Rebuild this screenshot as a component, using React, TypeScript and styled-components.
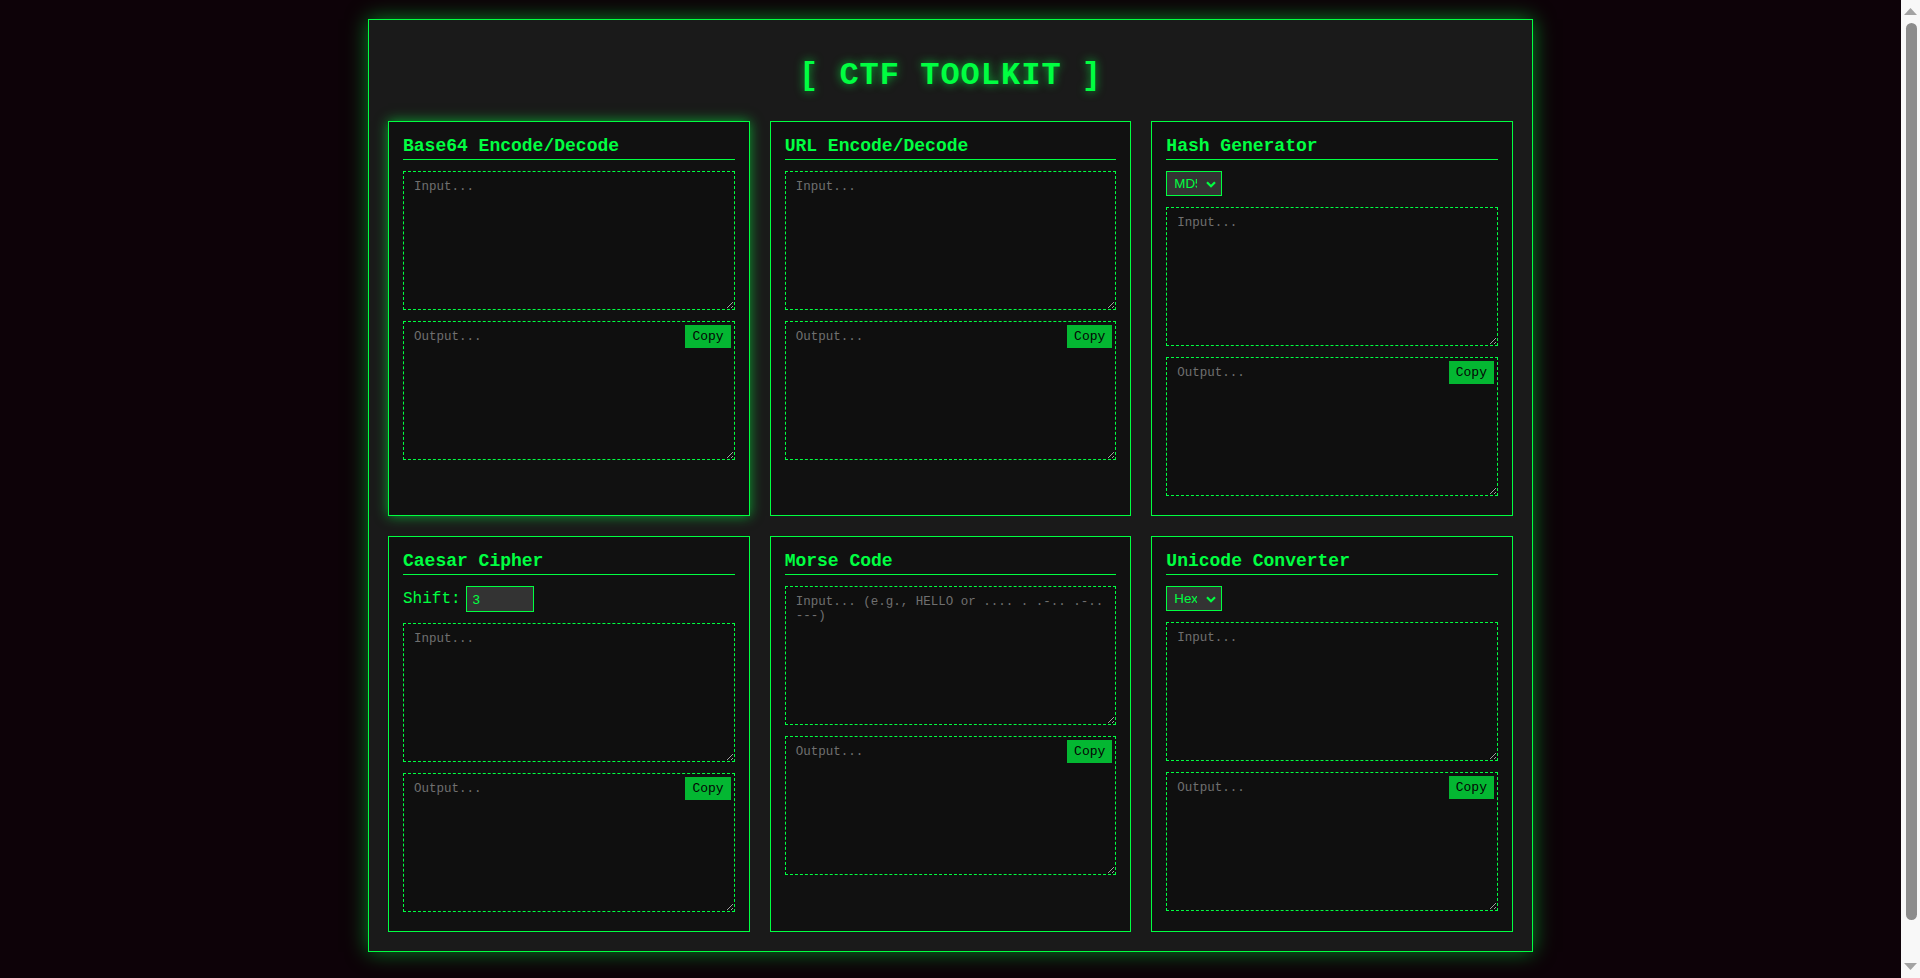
import React, { useState } from 'react';
import styled, { createGlobalStyle, css } from 'styled-components';

const GREEN = '#00ff41';
const MONO = `'Courier New', 'Liberation Mono', monospace`;
const SANS = `Arial, 'Liberation Sans', sans-serif`;

const GlobalStyle = createGlobalStyle`
  * { box-sizing: border-box; }
  html { background: #0d0208; }
  body {
    margin: 0;
    padding: 19px 19px 40px 0;
    background: #0d0208;
    color: ${GREEN};
    font-family: ${MONO};
  }
`;

const Terminal = styled.main`
  width: 1165px;
  margin: 0 auto;
  padding: 19px;
  background: #1a1a1a;
  border: 1px solid ${GREEN};
  box-shadow: 0 0 20px rgba(0, 255, 65, 0.5);
`;

const Heading = styled.h1`
  margin: 18px 0 27px;
  text-align: center;
  font-size: 32px;
  font-weight: bold;
  line-height: normal;
  letter-spacing: 1px;
  color: ${GREEN};
  text-shadow: 0 0 10px rgba(0, 255, 65, 0.7);
`;

const ToolGrid = styled.div`
  display: grid;
  grid-template-columns: repeat(3, 1fr);
  gap: 20px;
`;

const ToolCard = styled.section<{ $active?: boolean }>`
  display: flex;
  flex-direction: column;
  gap: 11px;
  padding: 14px 14px 19px;
  background: #111111;
  border: 1px solid ${GREEN};
  ${(p) =>
    p.$active &&
    css`
      box-shadow: 0 0 12px rgba(0, 255, 65, 0.6);
    `}
`;

const ToolTitle = styled.h3`
  margin: 0;
  padding-bottom: 3px;
  font-size: 18px;
  font-weight: bold;
  line-height: normal;
  color: ${GREEN};
  border-bottom: 1px solid ${GREEN};
`;

const Field = styled.textarea`
  display: block;
  width: 100%;
  height: 139px;
  margin: 0;
  padding: 8px 10px;
  background: #0f0f0f;
  color: ${GREEN};
  border: 1px dashed ${GREEN};
  border-radius: 0;
  font-family: ${MONO};
  font-size: 12.5px;
  line-height: normal;
  outline: none;
  &::placeholder {
    color: #707070;
  }
`;

const OutputBox = styled.div`
  position: relative;
`;

const CopyButton = styled.button`
  position: absolute;
  top: 4px;
  right: 4px;
  padding: 4px 7px;
  border: none;
  border-radius: 0;
  background: ${GREEN};
  opacity: 0.7;
  color: #000;
  font-family: ${MONO};
  font-size: 13px;
  line-height: normal;
  cursor: pointer;
`;

const PickerWrap = styled.div`
  position: relative;
  align-self: flex-start;
  display: flex;
`;

const Picker = styled.select`
  appearance: none;
  width: 56px;
  height: 25px;
  padding: 0 24px 0 7px;
  background: #333333;
  color: ${GREEN};
  border: 1px solid ${GREEN};
  border-radius: 0;
  font-family: ${SANS};
  font-size: 13.33px;
  outline: none;
`;

const PickerArrow = styled.svg`
  position: absolute;
  right: 6px;
  top: 50%;
  width: 10px;
  height: 7px;
  margin-top: -3px;
  pointer-events: none;
`;

const ControlRow = styled.div`
  display: flex;
  align-items: center;
  gap: 5px;
`;

const ControlLabel = styled.label`
  font-size: 16px;
  color: ${GREEN};
`;

const NumberInput = styled.input`
  width: 68px;
  height: 26px;
  padding: 0 6px;
  background: #333333;
  color: ${GREEN};
  border: 1px solid ${GREEN};
  border-radius: 0;
  font-family: ${SANS};
  font-size: 13.33px;
  outline: none;
`;

const ScrollRail = styled.div`
  position: fixed;
  top: 0;
  right: 0;
  bottom: 0;
  width: 19px;
  background: #f8f8f8;
  display: flex;
  flex-direction: column;
  align-items: center;
  padding: 8px 0;
  gap: 8px;
`;

const ScrollArrow = styled.svg<{ $end?: boolean }>`
  width: 13px;
  height: 7px;
  flex: none;
  ${(p) =>
    p.$end &&
    css`
      margin-top: auto;
    `}
`;

const ScrollThumb = styled.div`
  width: 11px;
  height: 897px;
  margin-left: 1px;
  background: #8c8c8c;
  border-radius: 6px;
`;

type Tool = {
  title: string;
  placeholder?: string;
  control?: 'hash' | 'shift' | 'unicode';
  active?: boolean;
};

const tools: Tool[] = [
  { title: 'Base64 Encode/Decode', active: true },
  { title: 'URL Encode/Decode' },
  { title: 'Hash Generator', control: 'hash' },
  { title: 'Caesar Cipher', control: 'shift' },
  { title: 'Morse Code', placeholder: 'Input... (e.g., HELLO or .... . .-.. .-.. ---)' },
  { title: 'Unicode Converter', control: 'unicode' },
];

function Chevron() {
  return (
    <PickerArrow viewBox="0 0 10 7" aria-hidden="true">
      <path d="M1 1.2 L5 5.2 L9 1.2" fill="none" stroke={GREEN} strokeWidth="2.2" />
    </PickerArrow>
  );
}

function Control({ kind }: { kind?: Tool['control'] }) {
  const [shift, setShift] = useState('3');
  if (kind === 'hash') {
    return (
      <PickerWrap>
        <Picker defaultValue="md5">
          <option value="md5">MD5</option>
          <option value="sha1">SHA-1</option>
          <option value="sha256">SHA-256</option>
          <option value="sha512">SHA-512</option>
        </Picker>
        <Chevron />
      </PickerWrap>
    );
  }
  if (kind === 'unicode') {
    return (
      <PickerWrap>
        <Picker defaultValue="hex">
          <option value="hex">Hex</option>
          <option value="dec">Decimal</option>
          <option value="bin">Binary</option>
        </Picker>
        <Chevron />
      </PickerWrap>
    );
  }
  if (kind === 'shift') {
    return (
      <ControlRow>
        <ControlLabel htmlFor="shift">Shift:</ControlLabel>
        <NumberInput id="shift" type="number" value={shift} onChange={(e) => setShift(e.target.value)} />
      </ControlRow>
    );
  }
  return null;
}

function ToolPanel({ tool }: { tool: Tool }) {
  return (
    <ToolCard $active={tool.active}>
      <ToolTitle>{tool.title}</ToolTitle>
      <Control kind={tool.control} />
      <Field placeholder={tool.placeholder ?? 'Input...'} />
      <OutputBox>
        <Field placeholder="Output..." readOnly />
        <CopyButton type="button">Copy</CopyButton>
      </OutputBox>
    </ToolCard>
  );
}

export default function App() {
  return (
    <>
      <GlobalStyle />
      <Terminal>
        <Heading>[ CTF TOOLKIT ]</Heading>
        <ToolGrid>
          {tools.map((t) => (
            <ToolPanel key={t.title} tool={t} />
          ))}
        </ToolGrid>
      </Terminal>
      <ScrollRail aria-hidden="true">
        <ScrollArrow viewBox="0 0 13 7">
          <path d="M6.5 0 L13 7 L0 7 Z" fill="#a3a3a3" />
        </ScrollArrow>
        <ScrollThumb />
        <ScrollArrow viewBox="0 0 13 7" $end>
          <path d="M0 0 L13 0 L6.5 7 Z" fill="#a3a3a3" />
        </ScrollArrow>
      </ScrollRail>
    </>
  );
}
